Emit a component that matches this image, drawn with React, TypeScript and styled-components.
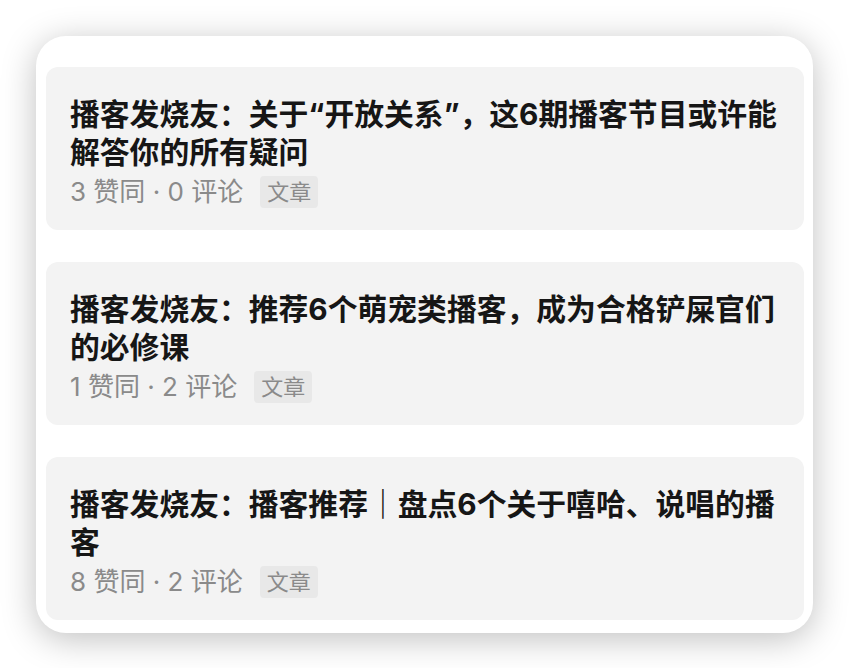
import React from 'react';
import styled, { createGlobalStyle } from 'styled-components';

const GlobalStyle = createGlobalStyle`
    body {
        margin: 0;
        background: #ffffff;
        font-family: Inter, "Noto Sans CJK SC", sans-serif;
    }
`;

const Page = styled.div`
    padding: 36px 37px 36px 36px;
`;

const Panel = styled.div`
    display: flex;
    flex-direction: column;
    gap: 32px;
    background: #ffffff;
    border-radius: 30px;
    padding: 31px 9px 13px 10px;
    box-shadow: 0 6px 34px rgba(0, 0, 0, 0.25);
`;

const Card = styled.div`
    display: flex;
    flex-direction: column;
    height: 163px;
    box-sizing: border-box;
    background: #f3f3f3;
    border-radius: 12px;
    padding: 28px 12px 0 24px;
`;

const Title = styled.div`
    font-size: 29.8px;
    line-height: 38px;
    font-weight: 700;
    color: #161616;
`;

const Meta = styled.div`
    display: flex;
    align-items: center;
    margin-top: 5px;
    font-size: 26px;
    line-height: 32px;
    color: #8a8a8a;
    white-space: pre;
`;

const Tag = styled.span`
    margin-left: 17px;
    padding: 0 7px;
    height: 32px;
    display: inline-flex;
    align-items: center;
    background: #e8e8e8;
    border-radius: 4px;
    font-size: 22px;
    color: #8a8a8a;
`;

const posts = [
    { title: '播客发烧友：关于“开放关系”，这6期播客节目或许能解答你的所有疑问', likes: 3, comments: 0 },
    { title: '播客发烧友：推荐6个萌宠类播客，成为合格铲屎官们的必修课', likes: 1, comments: 2 },
    { title: '播客发烧友：播客推荐｜盘点6个关于嘻哈、说唱的播客', likes: 8, comments: 2 },
];

const App: React.FC = () => {
    return (
        <Page>
            <GlobalStyle />
            <Panel>
                {posts.map((p) => (
                    <Card key={p.title}>
                        <Title>{p.title}</Title>
                        <Meta>
                            {`${p.likes} 赞同 · ${p.comments} 评论`}
                            <Tag>文章</Tag>
                        </Meta>
                    </Card>
                ))}
            </Panel>
        </Page>
    );
};

export default App;
